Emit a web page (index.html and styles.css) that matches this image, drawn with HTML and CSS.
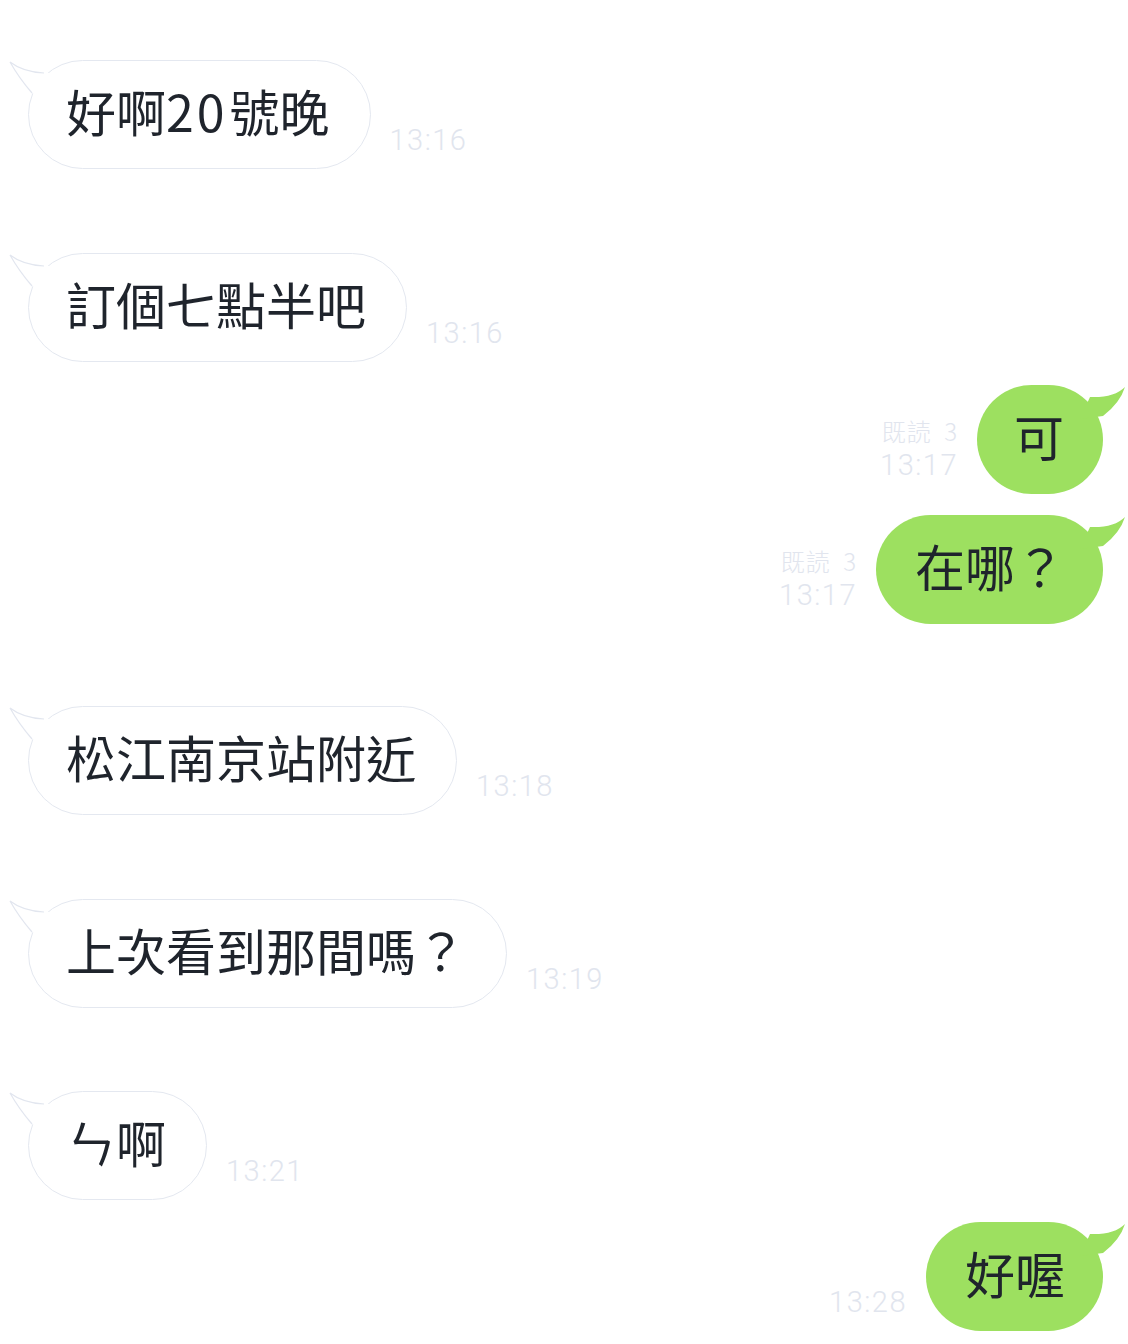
FILE: index.html
```html
<!DOCTYPE html>
<html lang="zh-Hant">
<head>
<meta charset="utf-8">
<link rel="stylesheet" href="styles.css">
</head>
<body>
<div class="chat">
  <div class="row in r1">
    <div class="bubble white b-wide">
      <svg class="tail-l" width="50" height="40" viewBox="0 0 50 40"><path d="M42 13 Q22 12 9 2 Q18 18 31 33 L48 40 L48 13 Z" fill="#fff"/><path d="M43 13 Q22 12 9 2 Q18 18 31 33" fill="none" stroke="#e2e6ef" stroke-width="1.2"/></svg>
      <span class="txt">好啊<span class="num">20</span>號晚</span>
    </div>
    <div class="meta"><span class="time">13:16</span></div>
  </div>
  <div class="row in r2">
    <div class="bubble white">
      <svg class="tail-l" width="50" height="40" viewBox="0 0 50 40"><path d="M42 13 Q22 12 9 2 Q18 18 31 33 L48 40 L48 13 Z" fill="#fff"/><path d="M43 13 Q22 12 9 2 Q18 18 31 33" fill="none" stroke="#e2e6ef" stroke-width="1.2"/></svg>
      <span class="txt">訂個七點半吧</span>
    </div>
    <div class="meta"><span class="time">13:16</span></div>
  </div>
  <div class="row out r3">
    <div class="meta right"><span class="read">既読 3</span><span class="time">13:17</span></div>
    <div class="bubble green b-ke">
      <svg class="tail-r" width="52" height="40" viewBox="0 0 52 40"><path d="M16 12 Q40 13 51 2 Q46 18 29 31 L6 34 Z" fill="#9de060"/></svg>
      <span class="txt">可</span>
    </div>
  </div>
  <div class="row out r4">
    <div class="meta right"><span class="read">既読 3</span><span class="time">13:17</span></div>
    <div class="bubble green">
      <svg class="tail-r" width="52" height="40" viewBox="0 0 52 40"><path d="M16 12 Q40 13 51 2 Q46 18 29 31 L6 34 Z" fill="#9de060"/></svg>
      <span class="txt">在哪？</span>
    </div>
  </div>
  <div class="row in r5">
    <div class="bubble white">
      <svg class="tail-l" width="50" height="40" viewBox="0 0 50 40"><path d="M42 13 Q22 12 9 2 Q18 18 31 33 L48 40 L48 13 Z" fill="#fff"/><path d="M43 13 Q22 12 9 2 Q18 18 31 33" fill="none" stroke="#e2e6ef" stroke-width="1.2"/></svg>
      <span class="txt">松江南京站附近</span>
    </div>
    <div class="meta"><span class="time">13:18</span></div>
  </div>
  <div class="row in r6">
    <div class="bubble white">
      <svg class="tail-l" width="50" height="40" viewBox="0 0 50 40"><path d="M42 13 Q22 12 9 2 Q18 18 31 33 L48 40 L48 13 Z" fill="#fff"/><path d="M43 13 Q22 12 9 2 Q18 18 31 33" fill="none" stroke="#e2e6ef" stroke-width="1.2"/></svg>
      <span class="txt">上次看到那間嗎？</span>
    </div>
    <div class="meta"><span class="time">13:19</span></div>
  </div>
  <div class="row in r7">
    <div class="bubble white">
      <svg class="tail-l" width="50" height="40" viewBox="0 0 50 40"><path d="M42 13 Q22 12 9 2 Q18 18 31 33 L48 40 L48 13 Z" fill="#fff"/><path d="M43 13 Q22 12 9 2 Q18 18 31 33" fill="none" stroke="#e2e6ef" stroke-width="1.2"/></svg>
      <span class="txt">ㄣ啊</span>
    </div>
    <div class="meta"><span class="time">13:21</span></div>
  </div>
  <div class="row out r8">
    <div class="meta right"><span class="time">13:28</span></div>
    <div class="bubble green">
      <svg class="tail-r" width="52" height="40" viewBox="0 0 52 40"><path d="M16 12 Q40 13 51 2 Q46 18 29 31 L6 34 Z" fill="#9de060"/></svg>
      <span class="txt">好喔</span>
    </div>
  </div>
</div>
</body>
</html>
```
FILE: styles.css
```css
html, body {
  margin: 0;
  padding: 0;
  background: #ffffff;
}
.chat {
  width: 1128px;
  height: 1344px;
  overflow: hidden;
  display: flex;
  flex-direction: column;
  padding: 0 25px 0 28px;
  box-sizing: border-box;
  font-family: "Noto Sans CJK TC", "Noto Sans CJK JP", sans-serif;
}
.row {
  display: flex;
  align-items: flex-end;
  gap: 19px;
}
.row.out {
  justify-content: flex-end;
}
.r1 { margin-top: 60px; }
.r2 { margin-top: 84px; }
.r3 { margin-top: 23px; }
.r4 { margin-top: 21px; }
.r5 { margin-top: 82px; }
.r6 { margin-top: 84px; }
.r7 { margin-top: 83px; }
.r8 { margin-top: 22px; }
.bubble {
  position: relative;
  height: 109px;
  box-sizing: border-box;
  border-radius: 55px;
  display: flex;
  align-items: center;
  padding: 0 40px 0 37px;
}
.bubble.white {
  background: #ffffff;
  border: 1px solid #e4e8f0;
}
.bubble.green {
  background: #9de060;
  padding: 0 38px 0 39px;
}
.bubble.b-ke {
  padding: 0 39px 0 37px;
}
.txt {
  font-size: 50px;
  line-height: 1;
  color: #1f242c;
  white-space: nowrap;
  position: relative;
  top: -5px;
}
.num {
  letter-spacing: 3px;
  margin-right: 2px;
}
.tail-l {
  position: absolute;
  left: -28px;
  top: -1px;
}
.tail-r {
  position: absolute;
  right: -23px;
  top: 0;
}
.meta {
  display: flex;
  flex-direction: column;
  margin-bottom: 12px;
}
.meta.right {
  align-items: flex-end;
}
.time {
  font-family: Roboto, "Liberation Sans", sans-serif;
  font-weight: 300;
  font-size: 29px;
  line-height: 34px;
  color: #e1e5ee;
  letter-spacing: 1.5px;
}
.read {
  font-family: "Noto Sans CJK TC", "Noto Sans CJK JP", sans-serif;
  font-weight: 300;
  font-size: 24px;
  line-height: 34px;
  color: #e1e5ee;
  word-spacing: 6px;
  letter-spacing: 1px;
}
```
